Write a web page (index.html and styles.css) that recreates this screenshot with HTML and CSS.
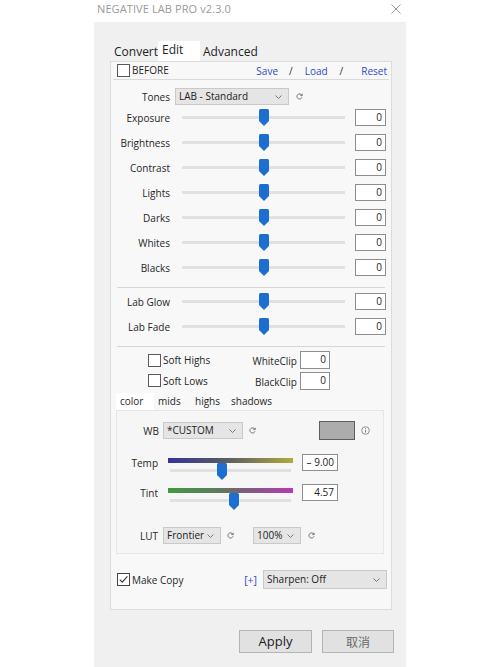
FILE: index.html
```html
<!DOCTYPE html>
<html>
<head>
<meta charset="utf-8">
<link rel="stylesheet" href="styles.css">
</head>
<body>
<div class="titlebar">
  <span class="title">NEGATIVE LAB PRO v2.3.0</span>
  <svg class="close" width="10" height="10" viewBox="0 0 10 10"><path d="M0.5 0.5 L9.5 9.5 M9.5 0.5 L0.5 9.5" stroke="#9a9a9a" stroke-width="1"/></svg>
</div>
<div class="window">
  <div class="tabs">
    <span class="tab t-convert">Convert</span>
    <span class="tab t-edit active">Edit</span>
    <span class="tab t-adv">Advanced</span>
  </div>
  <div class="panel">
    <div class="header">
      <span class="cb"><span class="box"></span>BEFORE</span>
      <span class="links"><span class="lnk">Save</span><span class="sl s1">/</span><span class="lnk l2">Load</span><span class="sl s2">/</span><span class="lnk l3">Reset</span></span>
    </div>

    <div class="tones">
      <span class="lbl">Tones</span>
      <span class="select sel-tones">LAB - Standard<svg class="chev" width="7" height="4" viewBox="0 0 7 4"><path d="M0.5 0.5 L3.5 3.5 L6.5 0.5" fill="none" stroke="#777"/></svg></span>
      <svg class="reset" width="7" height="7" viewBox="0 0 7 7"><path d="M5.8 2.2 A2.6 2.6 0 1 0 6 4.3" fill="none" stroke="#666" stroke-width="0.9"/><path d="M6.2 0.8 V2.6 H4.4" fill="none" stroke="#666" stroke-width="0.9"/></svg>
    </div>

    <div class="srow"><span class="lbl">Exposure</span><span class="track"><span class="line"></span><svg class="thumb" width="10" height="17" viewBox="0 0 10 17"><path d="M1.5 0 H8.5 Q10 0 10 1.5 V12 L5 17 L0 12 V1.5 Q0 0 1.5 0 Z" fill="#1c6fd0"/></svg></span><span class="val">0</span></div>
    <div class="srow"><span class="lbl">Brightness</span><span class="track"><span class="line"></span><svg class="thumb" width="10" height="17" viewBox="0 0 10 17"><path d="M1.5 0 H8.5 Q10 0 10 1.5 V12 L5 17 L0 12 V1.5 Q0 0 1.5 0 Z" fill="#1c6fd0"/></svg></span><span class="val">0</span></div>
    <div class="srow"><span class="lbl">Contrast</span><span class="track"><span class="line"></span><svg class="thumb" width="10" height="17" viewBox="0 0 10 17"><path d="M1.5 0 H8.5 Q10 0 10 1.5 V12 L5 17 L0 12 V1.5 Q0 0 1.5 0 Z" fill="#1c6fd0"/></svg></span><span class="val">0</span></div>
    <div class="srow"><span class="lbl">Lights</span><span class="track"><span class="line"></span><svg class="thumb" width="10" height="17" viewBox="0 0 10 17"><path d="M1.5 0 H8.5 Q10 0 10 1.5 V12 L5 17 L0 12 V1.5 Q0 0 1.5 0 Z" fill="#1c6fd0"/></svg></span><span class="val">0</span></div>
    <div class="srow"><span class="lbl">Darks</span><span class="track"><span class="line"></span><svg class="thumb" width="10" height="17" viewBox="0 0 10 17"><path d="M1.5 0 H8.5 Q10 0 10 1.5 V12 L5 17 L0 12 V1.5 Q0 0 1.5 0 Z" fill="#1c6fd0"/></svg></span><span class="val">0</span></div>
    <div class="srow"><span class="lbl">Whites</span><span class="track"><span class="line"></span><svg class="thumb" width="10" height="17" viewBox="0 0 10 17"><path d="M1.5 0 H8.5 Q10 0 10 1.5 V12 L5 17 L0 12 V1.5 Q0 0 1.5 0 Z" fill="#1c6fd0"/></svg></span><span class="val">0</span></div>
    <div class="srow"><span class="lbl">Blacks</span><span class="track"><span class="line"></span><svg class="thumb" width="10" height="17" viewBox="0 0 10 17"><path d="M1.5 0 H8.5 Q10 0 10 1.5 V12 L5 17 L0 12 V1.5 Q0 0 1.5 0 Z" fill="#1c6fd0"/></svg></span><span class="val">0</span></div>

    <div class="sep sep1"></div>

    <div class="srow"><span class="lbl">Lab Glow</span><span class="track"><span class="line"></span><svg class="thumb" width="10" height="17" viewBox="0 0 10 17"><path d="M1.5 0 H8.5 Q10 0 10 1.5 V12 L5 17 L0 12 V1.5 Q0 0 1.5 0 Z" fill="#1c6fd0"/></svg></span><span class="val">0</span></div>
    <div class="srow"><span class="lbl">Lab Fade</span><span class="track"><span class="line"></span><svg class="thumb" width="10" height="17" viewBox="0 0 10 17"><path d="M1.5 0 H8.5 Q10 0 10 1.5 V12 L5 17 L0 12 V1.5 Q0 0 1.5 0 Z" fill="#1c6fd0"/></svg></span><span class="val">0</span></div>

    <div class="sep"></div>

    <div class="checks">
      <div class="crow"><span class="cb"><span class="box"></span>Soft Highs</span><span class="clbl">WhiteClip</span><span class="val cval">0</span></div>
      <div class="crow"><span class="cb"><span class="box"></span>Soft Lows</span><span class="clbl">BlackClip</span><span class="val cval">0</span></div>
    </div>

    <div class="subtabs">
      <span class="stab active">color</span>
      <span class="stab">mids</span>
      <span class="stab">highs</span>
      <span class="stab">shadows</span>
    </div>
    <div class="subpanel">
      <div class="wbrow">
        <span class="slbl">WB</span>
        <span class="select sel-wb">*CUSTOM<svg class="chev" width="7" height="4" viewBox="0 0 7 4"><path d="M0.5 0.5 L3.5 3.5 L6.5 0.5" fill="none" stroke="#777"/></svg></span>
        <svg class="reset" width="7" height="7" viewBox="0 0 7 7"><path d="M5.8 2.2 A2.6 2.6 0 1 0 6 4.3" fill="none" stroke="#666" stroke-width="0.9"/><path d="M6.2 0.8 V2.6 H4.4" fill="none" stroke="#666" stroke-width="0.9"/></svg>
        <span class="swatch"></span>
        <svg class="info" width="9" height="9" viewBox="0 0 9 9"><circle cx="4.5" cy="4.5" r="3.8" fill="none" stroke="#777" stroke-width="0.8"/><path d="M4.5 3.8 V6.6" stroke="#777" stroke-width="0.9"/><circle cx="4.5" cy="2.5" r="0.5" fill="#777"/></svg>
      </div>
      <div class="grow temp">
        <span class="slbl">Temp</span>
        <span class="gblock"><span class="grad grad-temp"></span><span class="gline"></span><svg class="gthumb" style="left:42.8%" width="10" height="17" viewBox="0 0 10 17"><path d="M1.5 0 H8.5 Q10 0 10 1.5 V12 L5 17 L0 12 V1.5 Q0 0 1.5 0 Z" fill="#1c6fd0"/></svg></span>
        <span class="val gval">– 9.00</span>
      </div>
      <div class="grow tint">
        <span class="slbl">Tint</span>
        <span class="gblock"><span class="grad grad-tint"></span><span class="gline"></span><svg class="gthumb" style="left:52.4%" width="10" height="17" viewBox="0 0 10 17"><path d="M1.5 0 H8.5 Q10 0 10 1.5 V12 L5 17 L0 12 V1.5 Q0 0 1.5 0 Z" fill="#1c6fd0"/></svg></span>
        <span class="val gval">4.57</span>
      </div>
      <div class="lutrow">
        <span class="slbl">LUT</span>
        <span class="select sel-lut">Frontier<svg class="chev" width="7" height="4" viewBox="0 0 7 4"><path d="M0.5 0.5 L3.5 3.5 L6.5 0.5" fill="none" stroke="#777"/></svg></span>
        <svg class="reset r-lut" width="7" height="7" viewBox="0 0 7 7"><path d="M5.8 2.2 A2.6 2.6 0 1 0 6 4.3" fill="none" stroke="#666" stroke-width="0.9"/><path d="M6.2 0.8 V2.6 H4.4" fill="none" stroke="#666" stroke-width="0.9"/></svg>
        <span class="select sel-pct">100%<svg class="chev" width="7" height="4" viewBox="0 0 7 4"><path d="M0.5 0.5 L3.5 3.5 L6.5 0.5" fill="none" stroke="#777"/></svg></span>
        <svg class="reset r-pct" width="7" height="7" viewBox="0 0 7 7"><path d="M5.8 2.2 A2.6 2.6 0 1 0 6 4.3" fill="none" stroke="#666" stroke-width="0.9"/><path d="M6.2 0.8 V2.6 H4.4" fill="none" stroke="#666" stroke-width="0.9"/></svg>
      </div>
    </div>

    <div class="bottom">
      <span class="cb copy"><span class="box checked"><svg width="11" height="11" viewBox="0 0 11 11"><path d="M1.8 5.6 L4.3 8.2 L9.4 2.3" fill="none" stroke="#333" stroke-width="1.1"/></svg></span>Make Copy</span>
      <span class="plus">[+]</span>
      <span class="select sel-sharp">Sharpen: Off<svg class="chev" width="7" height="4" viewBox="0 0 7 4"><path d="M0.5 0.5 L3.5 3.5 L6.5 0.5" fill="none" stroke="#777"/></svg></span>
    </div>
  </div>
  <div class="buttons">
    <span class="btn apply">Apply</span>
    <span class="btn cancel">取消</span>
  </div>
</div>
</body>
</html>
```
FILE: styles.css
```css
* { box-sizing: border-box; }
html, body { margin: 0; padding: 0; }
body {
  background: #ffffff;
  font-family: "Open Sans", "Noto Sans", "Noto Sans CJK SC", sans-serif;
  font-size: 10px;
  color: #262626;
  width: 500px;
  height: 667px;
  overflow: hidden;
}

.titlebar {
  height: 22px;
  width: 304px;
  margin-left: 97px;
  display: flex;
  justify-content: space-between;
  align-items: flex-start;
  padding-top: 1px;
}
.title { font-size: 11px; line-height: 15px; color: #9a9a9a; letter-spacing: 0.1px; }
.close { margin-top: 3px; }

.window {
  margin-left: 94px;
  width: 312px;
  height: 645px;
  background: #f0f0f0;
  padding: 19px 12px 0 16px;
}

.tabs { display: flex; height: 20px; align-items: flex-end; }
.tab { font-size: 12px; line-height: 21px; height: 20px; color: #1e1e1e; }
.t-convert { width: 48px; padding-left: 4px; }
.t-edit { width: 42px; padding-left: 4px; background: #ffffff; line-height: 17px; }
.t-adv { padding-left: 3px; }

.panel {
  width: 282px;
  height: 549px;
  border: 1px solid #dcdcdc;
  background: #f8f8f8;
}

.header {
  margin: 0 2px;
  height: 18px;
  border-bottom: 1px solid #d9d9d9;
  display: flex;
  align-items: center;
  padding-left: 4px;
}
.cb { display: flex; align-items: center; line-height: 13px; }
.box {
  width: 13px; height: 13px;
  border: 1px solid #5a5a5a;
  background: #ffffff;
  margin-right: 2px;
  display: flex; align-items: center; justify-content: center;
}
.links { margin-left: auto; display: flex; color: #2b4bc8; padding-right: 2px; }
.lnk { color: #2b4bc8; }
.sl { color: #333; }
.s1 { margin-left: 11px; }
.l2 { margin-left: 12px; }
.s2 { margin-left: 12px; }
.l3 { margin-left: 18px; }

.tones {
  margin-top: 8px;
  height: 17px;
  display: flex;
  align-items: center;
}
.lbl { width: 59px; text-align: right; flex-shrink: 0; padding-top: 1px; }
.select {
  display: flex;
  align-items: center;
  height: 17px;
  background: #e5e5e5;
  border: 1px solid #c9c9c9;
  padding-left: 3px;
  line-height: 15px;
  color: #222;
}
.chev { margin-left: auto; margin-right: 6px; }
.sel-tones { margin-left: 5px; width: 114px; }
.tones .reset { margin-left: 7px; }

.srow {
  height: 25px;
  display: flex;
  align-items: center;
}
.track {
  position: relative;
  width: 163px;
  height: 17px;
  margin-left: 12px;
  display: flex;
  align-items: center;
}
.line { width: 100%; height: 3px; background: #e1e1e1; }
.thumb { position: absolute; left: 50%; top: 0; transform: translateX(-50%); }
.val {
  width: 31px;
  height: 17px;
  margin-left: 10px;
  background: #ffffff;
  border: 1px solid #8e8e8e;
  text-align: right;
  padding-right: 3px;
  line-height: 15px;
  color: #222;
}

.sep { margin: 7px 6px 0 6px; height: 1px; background: #d6d6d6; }
.sep1 + .srow { margin-top: 1px; }

.checks { margin-top: 3px; }
.crow { height: 20.5px; display: flex; align-items: center; padding-left: 37px; }
.crow .cb { width: 101px; padding-top: 1px; }
.crow .cb .box { margin-top: -1px; }
.clbl { width: 48px; text-align: right; padding-top: 2px; }
.cval { width: 30px; margin-left: 3px; height: 18px; }

.subtabs { margin-top: 2px; margin-left: 5px; display: flex; height: 17px; }
.stab { line-height: 17px; padding-left: 4px; }
.stab:nth-child(1) { width: 38px; background: #ffffff; }
.stab:nth-child(2) { width: 37px; }
.stab:nth-child(3) { width: 36px; }
.stab:nth-child(4) { width: 48px; }

.subpanel {
  margin: 0 7px 0 5px;
  height: 144px;
  border: 1px solid #e6e6e6;
  background: #f6f6f6;
  padding-top: 11px;
}
.slbl { text-align: right; flex-shrink: 0; padding-top: 1px; }
.wbrow { display: flex; align-items: center; height: 17px; }
.wbrow .slbl { width: 42px; }
.sel-wb { margin-left: 4px; width: 80px; }
.wbrow .reset { margin-left: 6px; }
.swatch {
  width: 36px; height: 19px;
  margin-left: 63px;
  background: #acacac;
  border: 1px solid #5e5e5e;
}
.info { margin-left: 6px; }

.grow { display: flex; align-items: flex-start; height: 26px; }
.temp { margin-top: 15px; }
.tint { margin-top: 4px; }
.grow .slbl { width: 41px; line-height: 17px; padding-top: 1px; }
.gblock { position: relative; width: 125px; height: 26px; margin-left: 10px; }
.grad { position: absolute; left: 0; right: 0; top: 4px; height: 5px; }
.grad-temp { background: linear-gradient(to right, #34349a, #55556a 40%, #6e6e5a 60%, #b2aa3a); }
.grad-tint { background: linear-gradient(to right, #3f9a3f, #5f7a5f 40%, #7a5f7a 60%, #b43cb4); }
.gline { position: absolute; left: 2px; right: 2px; top: 15px; height: 3px; background: #e0e0e0; }
.gthumb { position: absolute; top: 9px; transform: translateX(-50%); }
.gval { width: 36px; margin-left: 9px; }

.lutrow { display: flex; align-items: center; height: 17px; margin-top: 17px; }
.lutrow .slbl { width: 41px; }
.sel-lut { margin-left: 5px; width: 58px; }
.r-lut { margin-left: 6px; }
.sel-pct { margin-left: 19px; width: 48px; }
.r-pct { margin-left: 7px; }

.bottom {
  margin-top: 16px;
  height: 19px;
  display: flex;
  align-items: center;
  padding-left: 6px;
}
.copy { padding-top: 1px; }
.copy .box { border-color: #444; margin-top: -1px; }
.plus { margin-left: auto; color: #2b4bc8; font-size: 10.5px; padding-top: 1px; }
.sel-sharp { margin-left: 6px; width: 124px; height: 19px; margin-right: 4px; }

.buttons {
  margin-top: 20px;
  display: flex;
  justify-content: flex-end;
  gap: 10px;
}
.btn {
  height: 23px;
  background: #e1e1e1;
  border: 1px solid #b4b4b4;
  text-align: center;
  line-height: 21px;
}
.apply { width: 73px; font-size: 13px; color: #1a1a1a; }
.cancel { width: 72px; font-size: 12px; color: #6a6a6a; font-family: "Noto Sans CJK SC", sans-serif; }
```
